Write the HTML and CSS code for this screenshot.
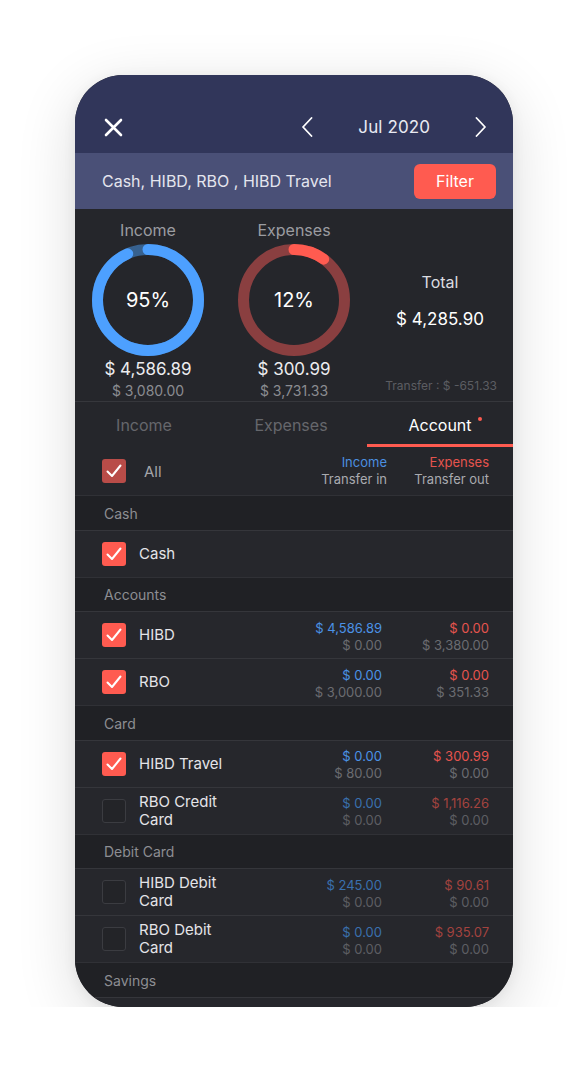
FILE: index.html
```html
<!DOCTYPE html>
<html lang="en">
<head>
<meta charset="utf-8">
<title>Accounts filter</title>
<link rel="stylesheet" href="styles.css">
</head>
<body>
<div class="phone">
  <header class="topbar">
    <svg class="close" width="19" height="19" viewBox="0 0 19 19"><path d="M2 2 L17 17 M17 2 L2 17" stroke="#fff" stroke-width="2.6" stroke-linecap="round" fill="none"/></svg>
    <div class="month-nav">
      <svg width="12" height="20" viewBox="0 0 12 20"><path d="M10.5 1 L2 10 L10.5 19" stroke="#fff" stroke-width="1.8" fill="none" stroke-linecap="round" stroke-linejoin="round"/></svg>
      <span class="month">Jul 2020</span>
      <svg width="12" height="20" viewBox="0 0 12 20"><path d="M1.5 1 L10 10 L1.5 19" stroke="#fff" stroke-width="1.8" fill="none" stroke-linecap="round" stroke-linejoin="round"/></svg>
    </div>
  </header>

  <div class="filterbar">
    <span class="filter-text">Cash, HIBD, RBO , HIBD Travel</span>
    <button class="filter-btn">Filter</button>
  </div>

  <section class="summary">
    <div class="stat">
      <div class="stat-label">Income</div>
      <div class="ring">
        <svg width="112" height="112" viewBox="0 0 112 112">
          <circle cx="56" cy="56" r="50.5" fill="none" stroke="#37618f" stroke-width="11"/>
          <circle cx="56" cy="56" r="50.5" fill="none" stroke="#4da0ff" stroke-width="11" pathLength="100" stroke-dasharray="93.4 6.6" stroke-linecap="round" transform="rotate(-90 56 56)"/>
        </svg>
        <span class="ring-pct">95%</span>
      </div>
      <div class="stat-amount">$ 4,586.89</div>
      <div class="stat-sub">$ 3,080.00</div>
    </div>
    <div class="stat">
      <div class="stat-label">Expenses</div>
      <div class="ring">
        <svg width="112" height="112" viewBox="0 0 112 112">
          <circle cx="56" cy="56" r="50.5" fill="none" stroke="#8a3f40" stroke-width="11"/>
          <circle cx="56" cy="56" r="50.5" fill="none" stroke="#ff5b50" stroke-width="11" pathLength="100" stroke-dasharray="10 90" stroke-linecap="round" transform="rotate(-90 56 56)"/>
        </svg>
        <span class="ring-pct">12%</span>
      </div>
      <div class="stat-amount">$ 300.99</div>
      <div class="stat-sub">$ 3,731.33</div>
    </div>
    <div class="total">
      <div class="total-label">Total</div>
      <div class="total-amount">$ 4,285.90</div>
      <div class="transfer">Transfer : $ -651.33</div>
    </div>
  </section>

  <nav class="tabs">
    <div class="tab tab-income">Income</div>
    <div class="tab tab-expenses">Expenses</div>
    <div class="tab active">Account<span class="dot"></span></div>
  </nav>

  <div class="all-row">
    <span class="cb partial"><svg width="24" height="24" viewBox="0 0 24 24"><path d="M5.5 12.5 L10 17 L18.5 6.5" stroke="#fff" stroke-width="2" fill="none" stroke-linecap="round" stroke-linejoin="round"/></svg></span>
    <span class="all-label">All</span>
    <div class="col-head inc-head"><span class="blue">Income</span><span>Transfer in</span></div>
    <div class="col-head exp-head"><span class="red">Expenses</span><span>Transfer out</span></div>
  </div>

  <div class="group">Cash</div>
  <div class="row">
    <span class="cb checked"><svg width="24" height="24" viewBox="0 0 24 24"><path d="M5.5 12.5 L10 17 L18.5 6.5" stroke="#fff" stroke-width="2" fill="none" stroke-linecap="round" stroke-linejoin="round"/></svg></span>
    <span class="name">Cash</span>
  </div>

  <div class="group">Accounts</div>
  <div class="row">
    <span class="cb checked"><svg width="24" height="24" viewBox="0 0 24 24"><path d="M5.5 12.5 L10 17 L18.5 6.5" stroke="#fff" stroke-width="2" fill="none" stroke-linecap="round" stroke-linejoin="round"/></svg></span>
    <span class="name">HIBD</span>
    <div class="amt inc"><span class="blue">$ 4,586.89</span><span class="sub">$ 0.00</span></div>
    <div class="amt exp"><span class="red">$ 0.00</span><span class="sub">$ 3,380.00</span></div>
  </div>
  <div class="row">
    <span class="cb checked"><svg width="24" height="24" viewBox="0 0 24 24"><path d="M5.5 12.5 L10 17 L18.5 6.5" stroke="#fff" stroke-width="2" fill="none" stroke-linecap="round" stroke-linejoin="round"/></svg></span>
    <span class="name">RBO</span>
    <div class="amt inc"><span class="blue">$ 0.00</span><span class="sub">$ 3,000.00</span></div>
    <div class="amt exp"><span class="red">$ 0.00</span><span class="sub">$ 351.33</span></div>
  </div>

  <div class="group">Card</div>
  <div class="row">
    <span class="cb checked"><svg width="24" height="24" viewBox="0 0 24 24"><path d="M5.5 12.5 L10 17 L18.5 6.5" stroke="#fff" stroke-width="2" fill="none" stroke-linecap="round" stroke-linejoin="round"/></svg></span>
    <span class="name">HIBD Travel</span>
    <div class="amt inc"><span class="blue">$ 0.00</span><span class="sub">$ 80.00</span></div>
    <div class="amt exp"><span class="red">$ 300.99</span><span class="sub">$ 0.00</span></div>
  </div>
  <div class="row off">
    <span class="cb empty"></span>
    <span class="name">RBO Credit Card</span>
    <div class="amt inc"><span class="blue">$ 0.00</span><span class="sub">$ 0.00</span></div>
    <div class="amt exp"><span class="red">$ 1,116.26</span><span class="sub">$ 0.00</span></div>
  </div>

  <div class="group">Debit Card</div>
  <div class="row off">
    <span class="cb empty"></span>
    <span class="name">HIBD Debit Card</span>
    <div class="amt inc"><span class="blue">$ 245.00</span><span class="sub">$ 0.00</span></div>
    <div class="amt exp"><span class="red">$ 90.61</span><span class="sub">$ 0.00</span></div>
  </div>
  <div class="row off">
    <span class="cb empty"></span>
    <span class="name">RBO Debit Card</span>
    <div class="amt inc"><span class="blue">$ 0.00</span><span class="sub">$ 0.00</span></div>
    <div class="amt exp"><span class="red">$ 935.07</span><span class="sub">$ 0.00</span></div>
  </div>

  <div class="group">Savings</div>
  <div class="row"></div>
</div>
</body>
</html>
```

FILE: styles.css
```css
* { box-sizing: border-box; }

html, body {
  margin: 0;
  background: #ffffff;
}

body {
  padding: 75px 0 0 75px;
  font-family: Inter, "Noto Sans", "Liberation Sans", sans-serif;
}

.phone {
  width: 438px;
  height: 932px;
  border-radius: 48px;
  overflow: hidden;
  background: #25262b;
  box-shadow: 0 14px 60px rgba(0, 0, 0, 0.14), 0 2px 14px rgba(0, 0, 0, 0.06);
  display: flex;
  flex-direction: column;
}

/* top bar */
.topbar {
  height: 78px;
  flex: none;
  background: #31365a;
  display: flex;
  align-items: center;
  justify-content: space-between;
  padding: 26px 26px 0 29px;
}

.close { display: block; }

.month-nav {
  display: flex;
  align-items: center;
  gap: 45px;
}

.month-nav svg { display: block; }

.month {
  color: #e9eaf2;
  font-size: 17px;
  letter-spacing: 0.1px;
}

/* filter bar */
.filterbar {
  height: 56px;
  flex: none;
  background: #4a5077;
  display: flex;
  align-items: center;
  justify-content: space-between;
  padding: 0 17px 0 27px;
}

.filter-text {
  color: #e4e5ee;
  font-size: 16px;
}

.filter-btn {
  width: 82px;
  height: 35px;
  border: none;
  border-radius: 6px;
  background: #ff5b50;
  color: #fff;
  font-family: inherit;
  font-size: 16px;
  padding: 0;
}

/* summary */
.summary {
  height: 193px;
  flex: none;
  display: grid;
  grid-template-columns: 146px 146px 146px;
  border-bottom: 1px solid #36373c;
}

.stat {
  display: flex;
  flex-direction: column;
  align-items: center;
  padding-top: 12px;
}

.stat-label {
  color: #9b9ca1;
  font-size: 16px;
  line-height: 18px;
}

.ring {
  margin-top: 5px;
  display: grid;
  place-items: center;
}

.ring svg, .ring-pct { grid-area: 1 / 1; }
.ring svg { display: block; }

.ring-pct {
  color: #ffffff;
  font-size: 20px;
}

.stat-amount {
  margin-top: 3px;
  color: #ececef;
  font-size: 17px;
  line-height: 20px;
}

.stat-sub {
  margin-top: 3px;
  color: #8b8c91;
  font-size: 14px;
  line-height: 18px;
}

.total {
  display: flex;
  flex-direction: column;
  align-items: center;
  padding-right: 16px;
  padding-left: 16px;
}

.total-label {
  margin-top: 63px;
  color: #dcdce0;
  font-size: 16px;
  line-height: 20px;
}

.total-amount {
  margin-top: 17px;
  color: #ffffff;
  font-size: 17px;
  line-height: 20px;
}

.transfer {
  margin-top: 50px;
  align-self: flex-end;
  color: #5c5d62;
  font-size: 12px;
  line-height: 14px;
}

/* tabs */
.tabs {
  height: 45px;
  flex: none;
  display: grid;
  grid-template-columns: 146px 146px 146px;
}

.tab {
  display: flex;
  align-items: center;
  justify-content: center;
  padding-top: 3px;
  border-bottom: 3px solid transparent;
  color: #66676c;
  font-size: 16px;
}

.tab-income { padding-right: 8px; }
.tab-expenses { padding-right: 6px; }

.tab.active {
  color: #ffffff;
  border-bottom-color: #ff5b50;
  padding-left: 10px;
}

.dot {
  width: 4px;
  height: 4px;
  border-radius: 50%;
  background: #ff5b50;
  margin-left: 6px;
  align-self: flex-start;
  margin-top: 12px;
}

/* all row */
.all-row {
  height: 48px;
  flex: none;
  display: flex;
  align-items: center;
  padding: 0 24px 0 27px;
}

.all-label {
  margin-left: 18px;
  flex: 1;
  color: #a3a4a9;
  font-size: 15px;
}

.col-head {
  display: flex;
  flex-direction: column;
  align-items: flex-end;
  font-size: 13px;
  line-height: 17px;
  color: #a9aaaf;
}

.inc-head { width: 100px; }
.exp-head { width: 102px; }

.col-head .blue { color: #4b8fe0; }
.col-head .red { color: #e5544e; }

/* checkboxes */
.cb {
  width: 24px;
  height: 24px;
  flex: none;
  border-radius: 3px;
  display: block;
}

.cb svg { display: block; }

.cb.checked { background: #ff5b50; }
.cb.partial { background: #b94c48; }
.cb.empty {
  background: #232428;
  border: 1px solid #3b3c41;
}

/* groups and rows */
.group {
  height: 34.5px;
  flex: none;
  display: flex;
  align-items: center;
  padding-left: 29px;
  padding-top: 1px;
  background: #202125;
  border-top: 1px solid #303136;
  color: #8d8e93;
  font-size: 14px;
}

.row {
  height: 47px;
  flex: none;
  display: flex;
  align-items: center;
  padding: 0 24px 0 27px;
  background: #26272c;
  border-top: 1px solid #35363b;
}

.name {
  margin-left: 13px;
  flex: 1;
  max-width: 100px;
  margin-right: auto;
  color: #e4e4e8;
  font-size: 15px;
  line-height: 18px;
}

.amt {
  display: flex;
  flex-direction: column;
  align-items: flex-end;
  font-size: 13px;
  line-height: 17px;
  padding-top: 3px;
}

.amt.inc { width: 100px; margin-left: auto; }
.amt.exp { width: 107px; }

.amt .blue { color: #4b92e6; }
.amt .red { color: #e5544e; }
.amt .sub { color: #6b6c71; }

.row.off .amt .blue { color: #3a70ae; }
.row.off .amt .red { color: #a3433f; }
.row.off .amt .sub { color: #5d5e63; }
```
